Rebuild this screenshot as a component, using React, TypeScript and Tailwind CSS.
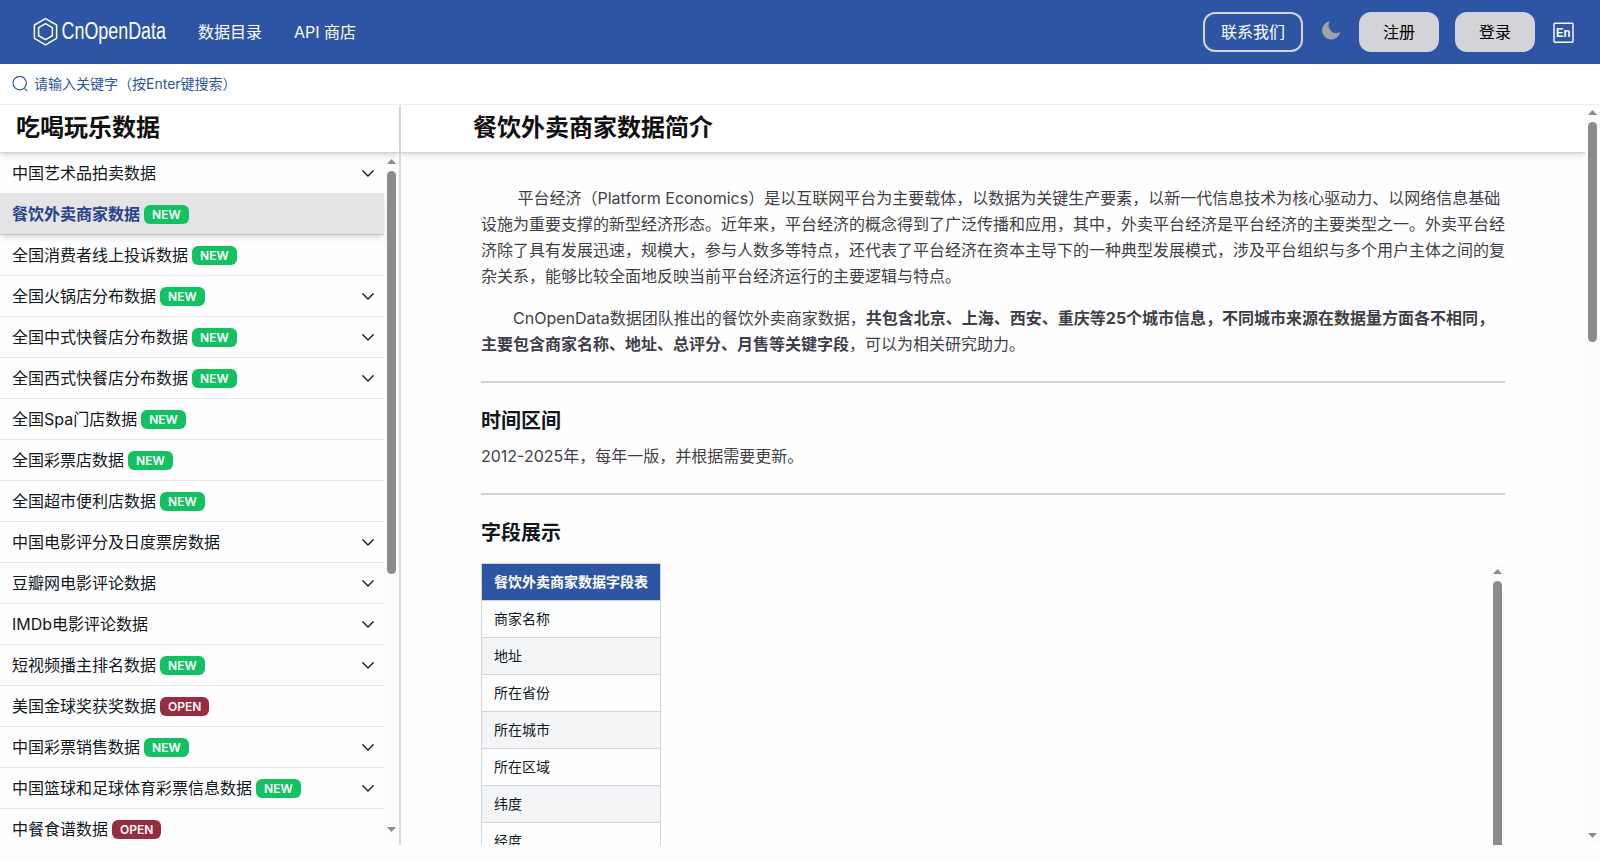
import type { ReactNode } from "react";

type Badge = "NEW" | "OPEN";

interface MenuItem {
  name: string;
  badge?: Badge;
  expandable?: boolean;
  active?: boolean;
}

const menu: MenuItem[] = [
  { name: "中国艺术品拍卖数据", expandable: true },
  { name: "餐饮外卖商家数据", badge: "NEW", active: true },
  { name: "全国消费者线上投诉数据", badge: "NEW" },
  { name: "全国火锅店分布数据", badge: "NEW", expandable: true },
  { name: "全国中式快餐店分布数据", badge: "NEW", expandable: true },
  { name: "全国西式快餐店分布数据", badge: "NEW", expandable: true },
  { name: "全国Spa门店数据", badge: "NEW" },
  { name: "全国彩票店数据", badge: "NEW" },
  { name: "全国超市便利店数据", badge: "NEW" },
  { name: "中国电影评分及日度票房数据", expandable: true },
  { name: "豆瓣网电影评论数据", expandable: true },
  { name: "IMDb电影评论数据", expandable: true },
  { name: "短视频播主排名数据", badge: "NEW", expandable: true },
  { name: "美国金球奖获奖数据", badge: "OPEN" },
  { name: "中国彩票销售数据", badge: "NEW", expandable: true },
  { name: "中国篮球和足球体育彩票信息数据", badge: "NEW", expandable: true },
  { name: "中餐食谱数据", badge: "OPEN" },
];

const fields = [
  "商家名称",
  "地址",
  "所在省份",
  "所在城市",
  "所在区域",
  "纬度",
  "经度",
];

const Logo = () => (
  <svg width="138" height="32" viewBox="0 0 138 32" fill="none" className="overflow-visible">
    <g stroke="#fff" strokeLinejoin="miter">
      <path d="M12.5 2.6 23.6 9V22.4L12.5 28.8 1.4 22.4V9Z" strokeWidth="1.5" />
      <path d="M12.5 7.6 19.4 11.6V19.7L12.5 23.7 5.6 19.7V11.6Z" strokeWidth="1.5" />
    </g>
    <text
      x="28.5"
      y="23.2"
      fill="#fff"
      fontFamily="Liberation Sans, Arial, sans-serif"
      fontSize="23"
      textLength="104.5"
      lengthAdjust="spacingAndGlyphs"
    >
      CnOpenData
    </text>
  </svg>
);

const Header = () => (
  <header className="flex h-16 shrink-0 items-center justify-between bg-[#2d55a4] text-base text-white">
    <div className="flex items-center">
      <div className="ml-[33px]">
        <Logo />
      </div>
      <a className="ml-[27px]">数据目录</a>
      <a className="ml-8">API 商店</a>
    </div>
    <div className="flex items-center pr-[25px]">
      <button className="h-10 w-[100px] rounded-xl border-2 border-zinc-300">
        联系我们
      </button>
      <svg className="mr-[18px] mb-1 ml-[18px]" width="20" height="20" viewBox="0 0 20 20" fill="#a1a1aa">
        <path d="M8.8 1.2A9.2 9.2 0 1 0 19.2 12.1 7.8 7.8 0 0 1 8.8 1.2Z" />
      </svg>
      <button className="h-10 w-20 rounded-xl bg-zinc-300 text-black">注册</button>
      <button className="ml-4 h-10 w-20 rounded-xl bg-zinc-300 text-black">登录</button>
      <svg className="ml-[18px]" width="22" height="24" viewBox="0 0 22 24" fill="none">
        <rect x="1" y="3.3" width="19" height="19" rx="1" stroke="#fff" strokeWidth="1.4" />
        <text
          x="3"
          y="17.3"
          fill="#fff"
          fontFamily="Liberation Sans, Arial, sans-serif"
          fontSize="12"
          fontWeight="700"
          textLength="14.5"
          lengthAdjust="spacingAndGlyphs"
        >
          En
        </text>
      </svg>
    </div>
  </header>
);

const SearchBar = () => (
  <div className="relative z-20 flex h-10 shrink-0 items-center bg-white pl-3 text-sm text-[#2d55a4] shadow-[0_1px_0_#ececec]">
    <svg width="16" height="16" viewBox="0 0 16 16" fill="none" stroke="#2d55a4" strokeWidth="1.2">
      <circle cx="7.7" cy="7.1" r="6.7" />
      <path d="m12.9 12.8 1.9 1.9" strokeLinecap="round" />
    </svg>
    <span className="ml-1.5">请输入关键字（按Enter键搜索）</span>
  </div>
);

const Arrow = ({ down }: { down?: boolean }) => (
  <svg width="9" height="5" viewBox="0 0 9 5" fill="#8b8b8b" className={down ? "rotate-180" : ""}>
    <path d="M4.5 0 9 5H0Z" />
  </svg>
);

const Scrollbar = ({ thumb, bottom = true }: { thumb: string; bottom?: boolean }) => (
  <div className="flex w-[15px] shrink-0 flex-col items-center justify-between bg-[#fcfcfc]">
    <div className="flex flex-col items-center pt-1.5">
      <Arrow />
      <div className={`mt-[7px] w-[9px] bg-[#8b8b8b] ${thumb}`}></div>
    </div>
    {bottom && (
      <div className="pb-[7px]">
        <Arrow down />
      </div>
    )}
  </div>
);

const Tag = ({ type }: { type: Badge }) => (
  <span
    className={`mt-px ml-1 flex h-[19px] items-center rounded-md px-2 pt-px text-xs font-semibold text-white ${
      type === "NEW" ? "bg-[#12c261]" : "bg-[#962d40]"
    }`}
  >
    {type}
  </span>
);

const MenuRow = ({ item }: { item: MenuItem }) => (
  <li
    className={`flex h-[41px] shrink-0 items-center border-b pr-2.5 pl-3 ${
      item.active
        ? "relative border-[#c9c9cc] bg-[#e4e4e7] font-bold text-[#27418c] shadow-md"
        : "border-gray-200 text-[#11181c]"
    }`}
  >
    {item.name}
    {item.badge && <Tag type={item.badge} />}
    {item.expandable && (
      <svg className="ml-auto" width="12" height="7" viewBox="0 0 12 7" fill="none" stroke="#11181c" strokeWidth="1.3">
        <path d="m.8.8 5.2 5.2L11.2.8" strokeLinecap="round" strokeLinejoin="round" />
      </svg>
    )}
  </li>
);

const Sidebar = () => (
  <aside className="flex w-[401px] shrink-0 flex-col border-r-2 border-[#d9d9d9]">
    <h2 className="z-10 flex h-[49px] shrink-0 items-center border-b border-[#d4d4d4] bg-white pb-px pl-4 text-2xl font-semibold text-[#111] shadow-md">
      吃喝玩乐数据
    </h2>
    <div className="flex h-[686px] overflow-hidden">
      <ul className="flex min-w-0 flex-1 flex-col">
        {menu.map((item) => (
          <MenuRow key={item.name} item={item} />
        ))}
      </ul>
      <Scrollbar thumb="h-[403px] rounded-full" />
    </div>
  </aside>
);

const Section = ({ title, children }: { title: string; children: ReactNode }) => (
  <section className="mt-6 border-t-2 border-zinc-300 pt-6">
    <h3 className="text-xl leading-7 font-semibold text-[#11181c]">{title}</h3>
    {children}
  </section>
);

const FieldTable = () => (
  <table className="border-collapse text-sm leading-5 text-[#11181c]">
    <thead>
      <tr>
        <th className="border border-gray-300 bg-[#2d55a4] px-3 py-2 font-bold text-white">
          餐饮外卖商家数据字段表
        </th>
      </tr>
    </thead>
    <tbody>
      {fields.map((field) => (
        <tr key={field} className="even:bg-gray-100">
          <td className="border border-gray-300 px-3 py-2">{field}</td>
        </tr>
      ))}
    </tbody>
  </table>
);

const Content = () => (
  <main className="flex min-w-0 flex-1 flex-col overflow-hidden">
    <h1 className="flex h-[49px] shrink-0 items-center border-b border-[#d4d4d4] bg-white pb-px pl-[72px] text-2xl font-semibold text-[#111] shadow-md">
      餐饮外卖商家数据简介
    </h1>
    <article className="mx-auto w-[1024px] pt-8 text-base leading-[26px] text-zinc-700">
      <p className="indent-8">
        {"\u00a0"}平台经济（Platform Economics）是以互联网平台为主要载体，以数据为关键生产要素，以新一代信息技术为核心驱动力、以网络信息基础设施为重要支撑的新型经济形态。近年来，平台经济的概念得到了广泛传播和应用，其中，外卖平台经济是平台经济的主要类型之一。外卖平台经济除了具有发展迅速，规模大，参与人数多等特点，还代表了平台经济在资本主导下的一种典型发展模式，涉及平台组织与多个用户主体之间的复杂关系，能够比较全面地反映当前平台经济运行的主要逻辑与特点。
      </p>
      <p className="mt-4 indent-8">
        CnOpenData数据团队推出的餐饮外卖商家数据，
        <b>
          共包含北京、上海、西安、重庆等25个城市信息，不同城市来源在数据量方面各不相同，主要包含商家名称、地址、总评分、月售等关键字段
        </b>
        ，可以为相关研究助力。
      </p>
      <Section title="时间区间">
        <p className="mt-2">2012-2025年，每年一版，并根据需要更新。</p>
      </Section>
      <Section title="字段展示">
        <div className="mt-4 flex h-[282px] items-start justify-between overflow-hidden">
          <FieldTable />
          <div className="flex h-full">
            <Scrollbar thumb="h-[300px] rounded-t-full" bottom={false} />
          </div>
        </div>
      </Section>
    </article>
  </main>
);

const App = () => {
  return (
    <div className="flex h-[861px] flex-col overflow-hidden bg-[#fefefe] font-[Inter,'Noto_Sans_CJK_SC',sans-serif]">
      <Header />
      <SearchBar />
      <div className="flex h-[741px] shrink-0">
        <Sidebar />
        <Content />
        <Scrollbar thumb="h-[220px] rounded-full" />
      </div>
    </div>
  );
};

export default App;
